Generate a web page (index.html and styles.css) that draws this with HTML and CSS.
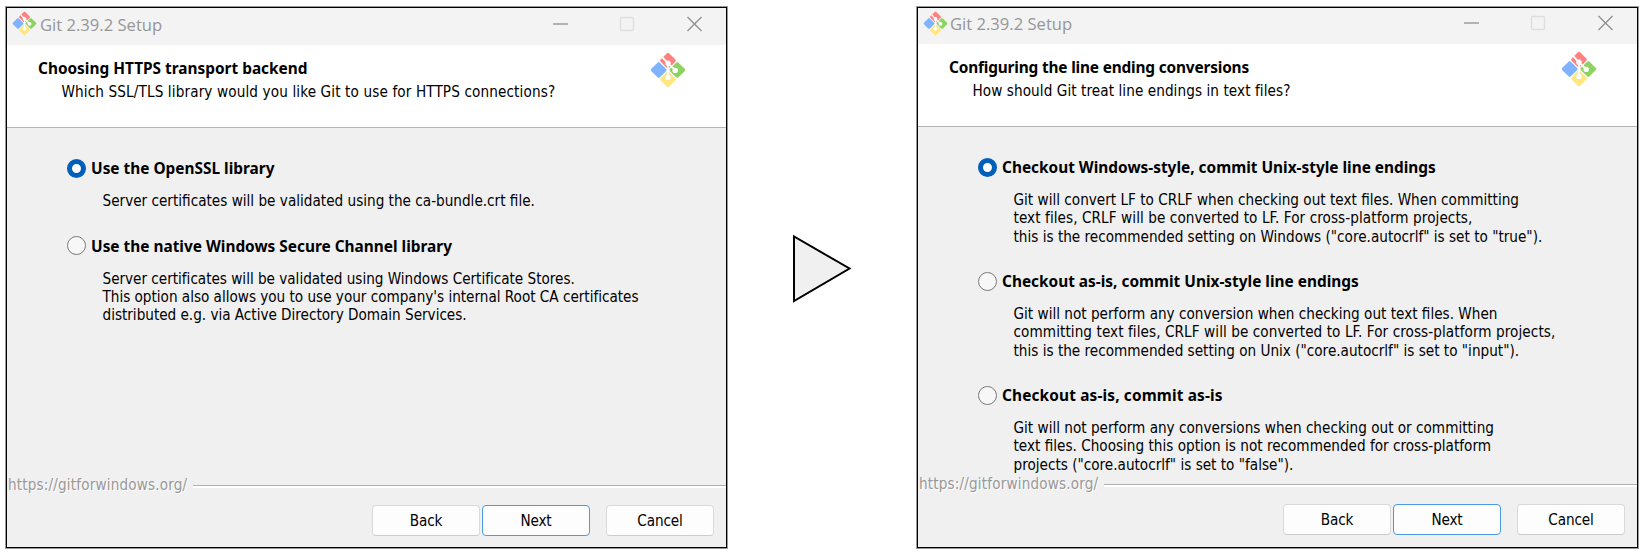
FILE: index.html
```
<!DOCTYPE html>
<html lang="en">
<head>
<meta charset="utf-8">
<title>Git 2.39.2 Setup</title>
<link rel="stylesheet" href="styles.css">
</head>
<body>
<svg class="defs" aria-hidden="true">
  <symbol id="git" viewBox="0 0 36 36">
    <g transform="rotate(45 18 18)">
      <rect x="5.4" y="5.4" width="12" height="12" rx="1.6" fill="#ff8080"/>
      <rect x="18.6" y="5.4" width="12" height="12" rx="1.6" fill="#8cd35f"/>
      <rect x="18.6" y="18.6" width="12" height="12" rx="1.6" fill="#ffe680"/>
      <rect x="5.4" y="18.6" width="12" height="12" rx="1.6" fill="#80b3ff"/>
    </g>
    <g fill="none" stroke="#fff" stroke-width="1.8">
      <path d="M12.400 5.400 18 11.400V26M18 11.400l7 6.600"/>
    </g>
    <g fill="#fff"><circle cx="18" cy="11.2" r="2.7"/><circle cx="25.2" cy="18.4" r="2.7"/><circle cx="18" cy="25.4" r="2.7"/></g>
  </symbol>
</svg>
<main class="stage">
  <section class="window">
    <header class="titlebar">
      <svg class="app-icon"><use href="#git"/></svg>
      <span class="caption">Git 2.39.2 Setup</span>
      <svg class="controls" viewBox="0 0 150 16"><path class="min" d="M0 8h15"/><rect class="max" x="67.5" y="1.5" width="13" height="13" rx="1"/><path class="close" d="M134.5 1l14 14M148.500 1l-14 14"/></svg>
    </header>
    <div class="banner">
      <div>
        <h1>Choosing HTTPS transport backend</h1>
        <p class="wide">Which SSL/TLS library would you like Git to use for HTTPS connections?</p>
      </div>
      <svg class="logo"><use href="#git"/></svg>
    </div>
    <div class="content">
      <div class="option option-short">
        <div class="choice"><i class="radio on"></i><b>Use the OpenSSL library</b></div>
        <p>Server certificates will be validated using the ca-bundle.crt file.</p>
      </div>
      <div class="option">
        <div class="choice"><i class="radio"></i><b>Use the native Windows Secure Channel library</b></div>
        <p class="narrow">Server certificates will be validated using Windows Certificate Stores.<br>This option also allows you to use your company's internal Root CA certificates<br>distributed e.g. via Active Directory Domain Services.</p>
      </div>
    </div>
    <div class="divider"><span>https://gitforwindows.org/</span></div>
    <footer class="actions"><button>Back</button><button class="primary">Next</button><button class="cancel">Cancel</button></footer>
  </section>

  <svg class="arrow" viewBox="0 0 60 70"><path d="M2 2.500V67L57.500 34.500Z"/></svg>

  <section class="window second">
    <header class="titlebar">
      <svg class="app-icon"><use href="#git"/></svg>
      <span class="caption">Git 2.39.2 Setup</span>
      <svg class="controls" viewBox="0 0 150 16"><path class="min" d="M0 8h15"/><rect class="max" x="67.5" y="1.5" width="13" height="13" rx="1"/><path class="close" d="M134.5 1l14 14M148.500 1l-14 14"/></svg>
    </header>
    <div class="banner">
      <div>
        <h1 class="tight">Configuring the line ending conversions</h1>
        <p class="loose">How should Git treat line endings in text files?</p>
      </div>
      <svg class="logo"><use href="#git"/></svg>
    </div>
    <div class="content">
      <div class="option">
        <div class="choice"><i class="radio on"></i><b>Checkout Windows-style, commit Unix-style line endings</b></div>
        <p>Git will convert LF to CRLF when checking out text files. When committing<br><span class="loose">text files, CRLF will be converted to LF. For cross-platform projects,</span><br>this is the recommended setting on Windows ("core.autocrlf" is set to "true").</p>
      </div>
      <div class="option">
        <div class="choice"><i class="radio"></i><b>Checkout as-is, commit Unix-style line endings</b></div>
        <p>Git will not perform any conversion when checking out text files. When<br><span class="loose">committing text files, CRLF will be converted to LF. For cross-platform projects,</span><br>this is the recommended setting on Unix ("core.autocrlf" is set to "input").</p>
      </div>
      <div class="option">
        <div class="choice"><i class="radio"></i><b class="spaced">Checkout as-is, commit as-is</b></div>
        <p>Git will not perform any conversions when checking out or committing<br>text files. Choosing this option is not recommended for cross-platform<br>projects ("core.autocrlf" is set to "false").</p>
      </div>
    </div>
    <div class="divider"><span>https://gitforwindows.org/</span></div>
    <footer class="actions"><button>Back</button><button class="primary">Next</button><button class="cancel">Cancel</button></footer>
  </section>
</main>
</body>
</html>
```
FILE: styles.css
```
* { box-sizing: border-box; }
body {
  margin: 0;
  background: #fff;
  color: #000;
  font: 15.15px/18.3px "DejaVu Sans Condensed", "DejaVu Sans", sans-serif;
  font-stretch: condensed;
}
.defs { display: block; width: 0; height: 0; }
h1, p { margin: 0; white-space: nowrap; }
h1, b { font: bold 15.4px/18px "Noto Sans", sans-serif; white-space: nowrap; }
.tight { letter-spacing: -0.17px; }
.wide { letter-spacing: .12px; }
.loose { letter-spacing: .07px; }
.narrow { letter-spacing: -.02px; }
.spaced { letter-spacing: .15px; }
.stage { display: flex; align-items: flex-start; padding: 7px 0 0 6px; height: 552px; }
.window {
  display: flex;
  flex-direction: column;
  flex-shrink: 0;
  width: 721px;
  height: 541px;
  border: 1px solid #000;
  background: #f0f0f0;
  box-shadow: 0 0 0 1px rgba(0, 0, 0, .4);
}
.titlebar { display: flex; flex-shrink: 0; align-items: center; height: 37px; padding: 0 23px 4px 5px; background: #f3f3f3; }
.app-icon { width: 25px; height: 25px; margin-top: -2px; }
.caption { margin-left: 3px; font: 16.6px/22px "Open Sans", sans-serif; color: #969696; }
.controls { width: 150px; height: 16px; margin: -2px 0 0 auto; fill: none; stroke-width: 1.3; }
.min, .close { stroke: #8f8f8f; }
.max { stroke: #dedede; }
.banner { display: flex; flex-shrink: 0; justify-content: space-between; height: 83px; padding: 7px 40px 0 31px; background: #fff; border-bottom: 1px solid #b4b4b4; }
.banner > div { padding-top: 8px; }
.banner p { padding: 5px 0 0 23.500px; }
.logo { width: 36px; height: 36px; }
.content { flex: 1; min-height: 0; padding: 30px 0 0 60px; }
.option { height: 114px; }
.option-short { height: 77.500px; }
.choice { display: flex; align-items: center; gap: 5px; height: 20px; }
.choice b { padding-top: 2px; }
.radio { width: 19px; height: 19px; border: 1px solid #7a7a7a; border-radius: 50%; background: #f7f7f7; }
.radio.on { border: 5.500px solid #005fb8; background: #fff; }
.option p { padding: 14px 0 0 35.500px; }
.divider { display: flex; flex-shrink: 0; align-items: center; gap: 6px; height: 20px; margin-bottom: 9px; color: #999; text-shadow: 1px 1px #fff; }
.divider span { padding: 0 0 2px 1px; letter-spacing: .15px; }
.divider::after { content: ""; flex: 1; height: 2px; border-top: 1px solid #b0b0b0; background: #fff; }
.actions { display: flex; flex-shrink: 0; gap: 2px; justify-content: flex-end; height: 42px; padding-right: 12px; }
.actions button { width: 108px; height: 31px; padding: 2px 0 0; border: 1px solid #d9d9d9; border-bottom-color: #ccc; border-radius: 4px; background: #fdfdfd; color: #000; font: inherit; letter-spacing: -.15px; }
.actions .primary { border-color: #4a9be0; }
.actions .cancel { margin-left: 14px; }
.arrow { flex-shrink: 0; width: 60px; height: 70px; margin: 227px 65px 0 65px; fill: #f0f0f0; stroke: #000; stroke-width: 2; }
.second .titlebar { height: 36px; }
.second .caption { margin-left: 2px; }
.second .actions { height: 43px; }
```
